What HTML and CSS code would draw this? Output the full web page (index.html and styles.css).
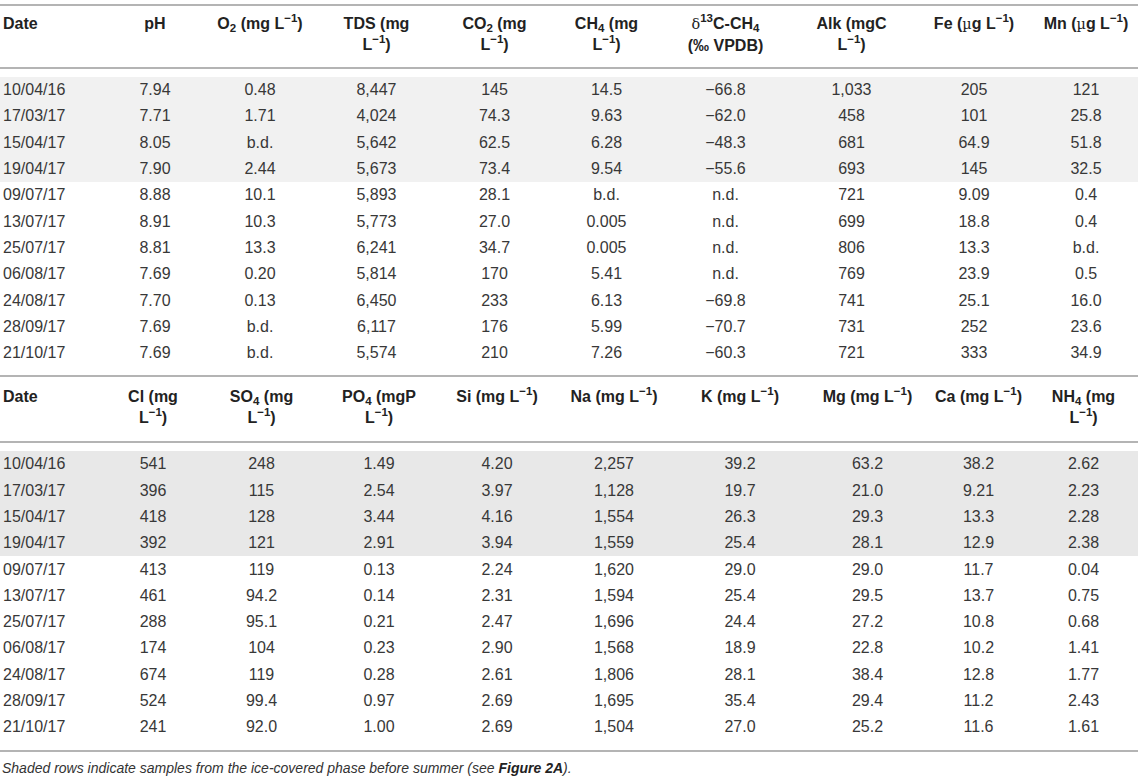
FILE: index.html
```html
<!DOCTYPE html>
<html lang="en">
<head>
    <meta charset="UTF-8">
    <meta name="viewport" content="width=device-width, initial-scale=1.0">
    <title>Table 1</title>
    <link rel="stylesheet" href="styles.css">
</head>
<body>
    <div class="table-wrap">
        <table class="data first">
            <colgroup>
                <col style="width: 105px"><col style="width: 100px"><col style="width: 110px"><col style="width: 123px"><col style="width: 113px">
                <col style="width: 111px"><col style="width: 127px"><col style="width: 125px"><col style="width: 120px"><col style="width: 104px">
            </colgroup>
            <thead>
                <tr>
                    <th>Date</th>
                    <th>pH</th>
                    <th>O<sub>2</sub> (mg L<sup>&minus;1</sup>)</th>
                    <th>TDS (mg<br>L<sup>&minus;1</sup>)</th>
                    <th>CO<sub>2</sub> (mg<br>L<sup>&minus;1</sup>)</th>
                    <th>CH<sub>4</sub> (mg<br>L<sup>&minus;1</sup>)</th>
                    <th><span class="sym">&delta;</span><sup>13</sup>C-CH<sub>4</sub><br>(&permil; VPDB)</th>
                    <th>Alk (mgC<br>L<sup>&minus;1</sup>)</th>
                    <th>Fe (<span class="sym">&micro;</span>g L<sup>&minus;1</sup>)</th>
                    <th>Mn (<span class="sym">&micro;</span>g L<sup>&minus;1</sup>)</th>
                </tr>
            </thead>
            <tbody>
                <tr class="ice"><td>10/04/16</td><td>7.94</td><td>0.48</td><td>8,447</td><td>145</td><td>14.5</td><td>&minus;66.8</td><td>1,033</td><td>205</td><td>121</td></tr>
                <tr class="ice"><td>17/03/17</td><td>7.71</td><td>1.71</td><td>4,024</td><td>74.3</td><td>9.63</td><td>&minus;62.0</td><td>458</td><td>101</td><td>25.8</td></tr>
                <tr class="ice"><td>15/04/17</td><td>8.05</td><td>b.d.</td><td>5,642</td><td>62.5</td><td>6.28</td><td>&minus;48.3</td><td>681</td><td>64.9</td><td>51.8</td></tr>
                <tr class="ice"><td>19/04/17</td><td>7.90</td><td>2.44</td><td>5,673</td><td>73.4</td><td>9.54</td><td>&minus;55.6</td><td>693</td><td>145</td><td>32.5</td></tr>
                <tr><td>09/07/17</td><td>8.88</td><td>10.1</td><td>5,893</td><td>28.1</td><td>b.d.</td><td>n.d.</td><td>721</td><td>9.09</td><td>0.4</td></tr>
                <tr><td>13/07/17</td><td>8.91</td><td>10.3</td><td>5,773</td><td>27.0</td><td>0.005</td><td>n.d.</td><td>699</td><td>18.8</td><td>0.4</td></tr>
                <tr><td>25/07/17</td><td>8.81</td><td>13.3</td><td>6,241</td><td>34.7</td><td>0.005</td><td>n.d.</td><td>806</td><td>13.3</td><td>b.d.</td></tr>
                <tr><td>06/08/17</td><td>7.69</td><td>0.20</td><td>5,814</td><td>170</td><td>5.41</td><td>n.d.</td><td>769</td><td>23.9</td><td>0.5</td></tr>
                <tr><td>24/08/17</td><td>7.70</td><td>0.13</td><td>6,450</td><td>233</td><td>6.13</td><td>&minus;69.8</td><td>741</td><td>25.1</td><td>16.0</td></tr>
                <tr><td>28/09/17</td><td>7.69</td><td>b.d.</td><td>6,117</td><td>176</td><td>5.99</td><td>&minus;70.7</td><td>731</td><td>252</td><td>23.6</td></tr>
                <tr><td>21/10/17</td><td>7.69</td><td>b.d.</td><td>5,574</td><td>210</td><td>7.26</td><td>&minus;60.3</td><td>721</td><td>333</td><td>34.9</td></tr>
            </tbody>
        </table>

        <table class="data second">
            <colgroup>
                <col style="width: 102px"><col style="width: 102px"><col style="width: 115px"><col style="width: 120px"><col style="width: 116px">
                <col style="width: 118px"><col style="width: 134px"><col style="width: 121px"><col style="width: 101px"><col style="width: 109px">
            </colgroup>
            <thead>
                <tr>
                    <th>Date</th>
                    <th>Cl (mg<br>L<sup>&minus;1</sup>)</th>
                    <th>SO<sub>4</sub> (mg<br>L<sup>&minus;1</sup>)</th>
                    <th>PO<sub>4</sub> (mgP<br>L<sup>&minus;1</sup>)</th>
                    <th>Si (mg L<sup>&minus;1</sup>)</th>
                    <th>Na (mg L<sup>&minus;1</sup>)</th>
                    <th>K (mg L<sup>&minus;1</sup>)</th>
                    <th>Mg (mg L<sup>&minus;1</sup>)</th>
                    <th>Ca (mg L<sup>&minus;1</sup>)</th>
                    <th>NH<sub>4</sub> (mg<br>L<sup>&minus;1</sup>)</th>
                </tr>
            </thead>
            <tbody>
                <tr class="ice"><td>10/04/16</td><td>541</td><td>248</td><td>1.49</td><td>4.20</td><td>2,257</td><td>39.2</td><td>63.2</td><td>38.2</td><td>2.62</td></tr>
                <tr class="ice"><td>17/03/17</td><td>396</td><td>115</td><td>2.54</td><td>3.97</td><td>1,128</td><td>19.7</td><td>21.0</td><td>9.21</td><td>2.23</td></tr>
                <tr class="ice"><td>15/04/17</td><td>418</td><td>128</td><td>3.44</td><td>4.16</td><td>1,554</td><td>26.3</td><td>29.3</td><td>13.3</td><td>2.28</td></tr>
                <tr class="ice"><td>19/04/17</td><td>392</td><td>121</td><td>2.91</td><td>3.94</td><td>1,559</td><td>25.4</td><td>28.1</td><td>12.9</td><td>2.38</td></tr>
                <tr><td>09/07/17</td><td>413</td><td>119</td><td>0.13</td><td>2.24</td><td>1,620</td><td>29.0</td><td>29.0</td><td>11.7</td><td>0.04</td></tr>
                <tr><td>13/07/17</td><td>461</td><td>94.2</td><td>0.14</td><td>2.31</td><td>1,594</td><td>25.4</td><td>29.5</td><td>13.7</td><td>0.75</td></tr>
                <tr><td>25/07/17</td><td>288</td><td>95.1</td><td>0.21</td><td>2.47</td><td>1,696</td><td>24.4</td><td>27.2</td><td>10.8</td><td>0.68</td></tr>
                <tr><td>06/08/17</td><td>174</td><td>104</td><td>0.23</td><td>2.90</td><td>1,568</td><td>18.9</td><td>22.8</td><td>10.2</td><td>1.41</td></tr>
                <tr><td>24/08/17</td><td>674</td><td>119</td><td>0.28</td><td>2.61</td><td>1,806</td><td>28.1</td><td>38.4</td><td>12.8</td><td>1.77</td></tr>
                <tr><td>28/09/17</td><td>524</td><td>99.4</td><td>0.97</td><td>2.69</td><td>1,695</td><td>35.4</td><td>29.4</td><td>11.2</td><td>2.43</td></tr>
                <tr><td>21/10/17</td><td>241</td><td>92.0</td><td>1.00</td><td>2.69</td><td>1,504</td><td>27.0</td><td>25.2</td><td>11.6</td><td>1.61</td></tr>
            </tbody>
        </table>

        <p class="footnote">Shaded rows indicate samples from the ice-covered phase before summer (see <strong>Figure 2A</strong>).</p>
    </div>
</body>
</html>
```

FILE: styles.css
```css
* {
    margin: 0;
    padding: 0;
    box-sizing: border-box;
}

body {
    font-family: "Liberation Sans", Arial, sans-serif;
    background: #fff;
    color: #333;
}

.table-wrap {
    width: 1138px;
    padding-top: 4px;
}

.data {
    width: 1138px;
    table-layout: fixed;
    border-collapse: separate;
    border-spacing: 0;
    border-top: 2px solid #b4b4b4;
    font-size: 16px;
}

.data th {
    font-weight: bold;
    color: #222;
    text-align: center;
    vertical-align: top;
    white-space: nowrap;
    line-height: 21px;
    padding: 7px 3px 11px;
    border-bottom: 2px solid #b4b4b4;
}

.data td {
    text-align: center;
    height: 26.3px;
    line-height: 26px;
    padding: 0 3px;
    color: #383838;
    white-space: nowrap;
}

.data th:first-child,
.data td:first-child {
    text-align: left;
}

.data tbody tr:first-child td {
    border-top: 8px solid #fff;
    height: 34.3px;
    background-clip: padding-box;
}

.data tbody tr:last-child td {
    height: 35.3px;
    padding-bottom: 9px;
}

.data tr.ice td {
    background-color: #f1f1f1;
}

.second tr.ice td {
    background-color: #e8e8e8;
}

.second {
    border-bottom: 2px solid #b4b4b4;
}

.second th {
    padding-top: 9px;
    padding-bottom: 13px;
}

sup, sub {
    font-size: 0.72em;
    line-height: 0;
}

sup {
    vertical-align: 0.6em;
}

sub {
    vertical-align: -0.3em;
}

.sym {
    font-family: "DejaVu Serif", "Liberation Serif", serif;
    font-weight: normal;
    font-size: 0.9em;
}

.footnote {
    font-style: italic;
    font-size: 14px;
    color: #333;
    padding: 8px 2px 0;
}

.footnote strong {
    font-weight: bold;
    color: #222;
}
```
